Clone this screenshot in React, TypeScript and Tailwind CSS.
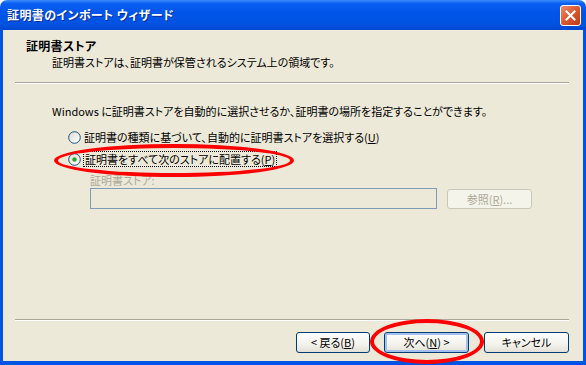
// XP-style "証明書のインポート ウィザード" dialog, certificate store page.
import type { ReactNode } from "react";

const font =
  "font-['Noto_Sans_CJK_JP','Noto_Sans_CJK_SC',sans-serif] [font-feature-settings:'palt']";

function Radio({ checked }: { checked?: boolean }) {
  return (
    <svg width="13" height="13" viewBox="0 0 13 13" className="shrink-0">
      <defs>
        <linearGradient id={checked ? "rg1" : "rg0"} x1="0" y1="0" x2="1" y2="1">
          <stop offset="0" stopColor="#dcdcd4" />
          <stop offset="1" stopColor="#ffffff" />
        </linearGradient>
      </defs>
      <circle
        cx="6.5"
        cy="6.5"
        r="5.8"
        fill={`url(#${checked ? "rg1" : "rg0"})`}
        stroke="#1c5180"
        strokeWidth="1"
      />
      {checked ? <circle cx="6.5" cy="6.5" r="2.2" fill="#2aa52a" /> : null}
    </svg>
  );
}

function Btn({
  children,
  w,
  def,
  disabled,
}: {
  children: ReactNode;
  w: string;
  def?: boolean;
  disabled?: boolean;
}) {
  return (
    <div
      className={
        "flex items-center justify-center rounded-[3px] border text-[11px] leading-none " +
        w +
        (disabled
          ? " border-[#c9c7ba] bg-[#f5f4ea] text-[#aca899]"
          : " border-[#003c74] bg-[linear-gradient(180deg,#ffffff_0%,#f3f2ec_60%,#e3e0d6_100%)] text-black") +
        (def ? " shadow-[inset_0_0_0_2px_#a4c0ef]" : "")
      }
    >
      {children}
    </div>
  );
}

export default function App() {
  return (
    <div className={"relative flex h-[365px] w-[586px] flex-col overflow-hidden " + font}>
      {/* title bar */}
      <div className="flex h-[30px] shrink-0 items-center justify-between rounded-t-[7px] bg-[linear-gradient(180deg,#3b8cfb_0%,#0a5ff2_12%,#0055e8_45%,#0053e2_80%,#0046cf_100%)] pl-[7px] pr-[5px]">
        <span className="text-[12px] font-bold leading-none tracking-[0.4px] text-white [text-shadow:1px_1px_#0b2a9a]">
          証明書のインポート ウィザード
        </span>
        <div className="flex h-[21px] w-[21px] items-center justify-center rounded-[3px] border border-white bg-[linear-gradient(135deg,#ec8a6b_0%,#d8552f_55%,#c0391a_100%)]">
          <svg width="11" height="11" viewBox="0 0 11 11">
            <path d="M1.5 1.5 L9.5 9.5 M9.5 1.5 L1.5 9.5" stroke="#fff" strokeWidth="2" strokeLinecap="square" />
          </svg>
        </div>
      </div>

      {/* body */}
      <div className="flex flex-1 flex-col border-x-[3px] border-b-[4px] border-[#0054e3] bg-[#ece9d8] text-[11px] text-black">
        <div className="pl-[23px] pt-[8px] text-[12px] font-bold leading-[16px] tracking-[0.3px]">証明書ストア</div>
        <div className="pl-[49px] leading-[16px]">
          証明書ストアは、証明書が保管されるシステム上の領域です。
        </div>
        <div className="ml-[12px] mr-[14px] mt-[12px] h-[2px] border-b border-t border-b-white border-t-[#aca899]" />

        <div className="mt-[19px] pl-[49px] leading-[16px]">
          Windows に証明書ストアを自動的に選択させるか、証明書の場所を指定することができます。
        </div>

        <div className="mt-[10px] flex h-[16px] items-center gap-[3px] pl-[65px]">
          <Radio />
          <span className="leading-[16px]">
            証明書の種類に基づいて、自動的に証明書ストアを選択する(<span className="underline">U</span>)
          </span>
        </div>
        <div className="mt-[6px] flex h-[16px] items-center gap-[2px] pl-[65px]">
          <Radio checked />
          <span className="border border-dotted border-black px-[1px] leading-[14px]">
            証明書をすべて次のストアに配置する(<span className="underline">P</span>)
          </span>
        </div>

        <div className="mt-[5px] pl-[87px] leading-[16px] text-[#aca899]">証明書ストア:</div>
        <div className="flex items-start gap-[10px] pl-[87px]">
          <div className="h-[21px] w-[347px] border border-[#7f9db9] bg-[#ece9d8]" />
          <div className="mt-[1px]">
            <Btn w="h-[20px] w-[85px]" disabled>
              参照(<span className="underline">R</span>)...
            </Btn>
          </div>
        </div>

        <div className="flex-1" />
        <div className="ml-[12px] mr-[14px] h-[2px] border-b border-t border-b-white border-t-[#aca899]" />
        <div className="mb-[8px] mt-[11px] flex justify-end pr-[14px]">
          <Btn w="h-[21px] w-[74px]">
            &lt; 戻る(<span className="underline">B</span>)
          </Btn>
          <div className="ml-[14px]">
            <Btn w="h-[21px] w-[85px]" def>
              次へ(<span className="underline">N</span>) &gt;
            </Btn>
          </div>
          <div className="ml-[15px]">
            <Btn w="h-[21px] w-[85px]">キャンセル</Btn>
          </div>
        </div>
      </div>

      {/* red annotation ellipses */}
      <div className="pointer-events-none absolute left-[54px] top-[144px] h-[33px] w-[240px] rounded-[50%] border-[4px] border-[#ff0000]" />
      <div className="pointer-events-none absolute left-[370px] top-[319px] h-[45px] w-[114px] rounded-[50%] border-[4px] border-[#ff0000]" />
    </div>
  );
}
